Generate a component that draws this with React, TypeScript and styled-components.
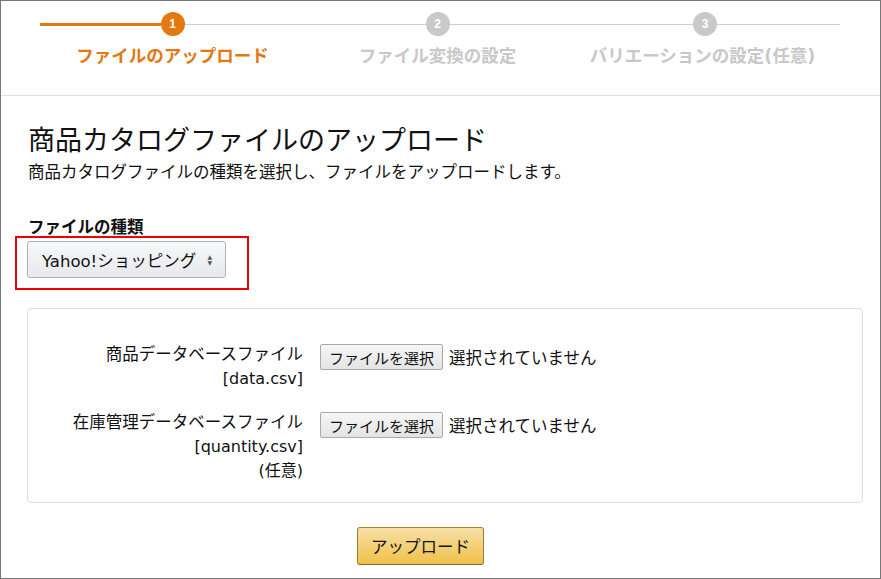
import React from 'react'
import styled, { createGlobalStyle } from 'styled-components'

const GlobalStyle = createGlobalStyle`
  body {
    margin: 0;
    background: #fff;
    font-family: "DejaVu Sans", "Noto Sans CJK JP", sans-serif;
    color: #111;
  }
`

const Frame = styled.div`
  background: #fff;
  border: 1px solid #777;
  box-sizing: border-box;
  height: 579px;
  overflow: hidden;
  width: 881px;
`

const Header = styled.header`
  border-bottom: 1px solid #ddd;
  box-sizing: border-box;
  height: 95px;
  padding: 11px 0 0 39px;
`

const Steps = styled.ol`
  display: grid;
  grid-template-columns: repeat(3, 265px);
  list-style: none;
  margin: 0;
  padding: 0;
`

const Step = styled.li`
  align-items: center;
  display: flex;
  flex-direction: column;
`

const Track = styled.div`
  align-items: center;
  align-self: stretch;
  display: flex;
  height: 24px;
`

const Segment = styled.span<{ $done?: boolean; $extend?: boolean }>`
  background: ${({ $done }) => ($done ? '#e47911' : '#cfcfcf')};
  flex: 1;
  height: ${({ $done }) => ($done ? '3px' : '1px')};
  margin-right: ${({ $extend }) => ($extend ? '-5px' : '0')};
`

const Circle = styled.span<{ $active?: boolean }>`
  align-items: center;
  background: ${({ $active }) => ($active ? '#e47911' : '#c9c9c9')};
  border-radius: 50%;
  color: #fff;
  display: flex;
  flex-shrink: 0;
  font-family: "Liberation Sans", sans-serif;
  font-size: 12px;
  font-weight: 700;
  height: 24px;
  justify-content: center;
  width: 24px;
`

const StepLabel = styled.span<{ $active?: boolean }>`
  color: ${({ $active }) => ($active ? '#e47911' : '#c8c8c8')};
  font-size: 17.5px;
  font-weight: 700;
  line-height: 22px;
  margin-top: 9px;
  white-space: nowrap;
`

const Main = styled.main`
  padding: 0 18px 0 27px;
`

const Title = styled.h1`
  font-size: 27px;
  font-weight: 400;
  line-height: 36px;
  margin: 27px 0 0;
`

const Lead = styled.p`
  font-size: 16.5px;
  line-height: 24px;
  margin: 2px 0 0;
`

const FieldLabel = styled.div`
  font-size: 16.5px;
  font-weight: 700;
  line-height: 24px;
  margin-top: 31px;
`

const Highlight = styled.div`
  border: 2px solid #e00;
  display: inline-block;
  margin: -4px 0 0 -13px;
  padding: 3px 21px 10px 10px;
`

const Select = styled.button`
  align-items: center;
  background: linear-gradient(#f7f8fa, #e7e9ec);
  border: 1px solid #adb1b8;
  border-radius: 3px;
  box-sizing: border-box;
  color: #111;
  display: flex;
  font-family: inherit;
  font-size: 16.5px;
  height: 37px;
  justify-content: space-between;
  padding: 0 13px 0 14px;
  white-space: nowrap;
  width: 199px;
`

const Arrows = styled.span`
  color: #555;
  display: flex;
  flex-direction: column;
  font-size: 6px;
  line-height: 6px;
`

const Box = styled.section`
  border: 1px solid #ddd;
  border-radius: 4px;
  box-sizing: border-box;
  display: flex;
  flex-direction: column;
  gap: 20px;
  margin: 18px 0 0 -1px;
  padding: 34px 0 19px;
  width: 836px;
`

const Row = styled.div`
  align-items: flex-start;
  display: flex;
  gap: 17px;
`

const RowLabel = styled.div`
  font-size: 16px;
  line-height: 24px;
  text-align: right;
  width: 275px;
`

const FileInput = styled.div`
  align-items: center;
  display: flex;
  font-size: 16.5px;
  gap: 6px;
  padding-top: 1px;
`

const FileButton = styled.button`
  background: linear-gradient(#f6f6f6, #e4e4e4);
  border: 1px solid #aaa;
  border-radius: 2px;
  color: #111;
  font-family: inherit;
  font-size: 15px;
  height: 26px;
  padding: 0 8px;
  width: 123px;
`

const Footer = styled.div`
  padding: 24px 0 0 329px;
`

const UploadButton = styled.button`
  background: linear-gradient(#f7dfa5, #f0c14b);
  border: 1px solid;
  border-color: #a88734 #9c7e31 #846a29;
  border-radius: 3px;
  color: #111;
  font-family: inherit;
  font-size: 16.5px;
  height: 38px;
  width: 127px;
`

const JaText = styled.span`
  font-size: 16.5px;
`

const steps = ['ファイルのアップロード', 'ファイル変換の設定', 'バリエーションの設定(任意)']

export default function App() {
  return (
    <>
      <GlobalStyle />
      <Frame>
        <Header>
          <Steps>
            {steps.map((label, i) => (
              <Step key={label}>
                <Track>
                  <Segment $done={i === 0} />
                  <Circle $active={i === 0}>{i + 1}</Circle>
                  <Segment $extend={i === steps.length - 1} />
                </Track>
                <StepLabel $active={i === 0}>{label}</StepLabel>
              </Step>
            ))}
          </Steps>
        </Header>
        <Main>
          <Title>商品カタログファイルのアップロード</Title>
          <Lead>商品カタログファイルの種類を選択し、ファイルをアップロードします。</Lead>
          <FieldLabel>ファイルの種類</FieldLabel>
          <Highlight>
            <Select>
              <span>Yahoo!ショッピング</span>
              <Arrows>
                <span>▲</span>
                <span>▼</span>
              </Arrows>
            </Select>
          </Highlight>
          <Box>
            <Row>
              <RowLabel>
                <JaText>商品データベースファイル</JaText>
                <br />
                [data.csv]
              </RowLabel>
              <FileInput>
                <FileButton>ファイルを選択</FileButton>
                選択されていません
              </FileInput>
            </Row>
            <Row>
              <RowLabel>
                <JaText>在庫管理データベースファイル</JaText>
                <br />
                [quantity.csv]
                <br />
                (任意)
              </RowLabel>
              <FileInput>
                <FileButton>ファイルを選択</FileButton>
                選択されていません
              </FileInput>
            </Row>
          </Box>
          <Footer>
            <UploadButton>アップロード</UploadButton>
          </Footer>
        </Main>
      </Frame>
    </>
  )
}
